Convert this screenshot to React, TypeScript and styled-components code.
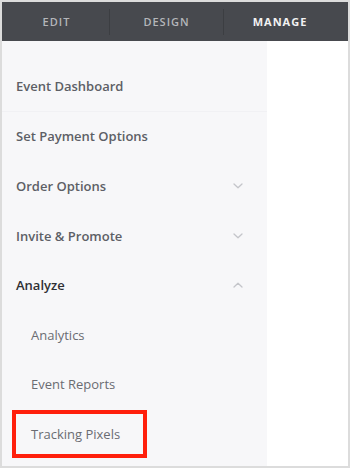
import React from "react";
import styled, { createGlobalStyle } from "styled-components";

const Global = createGlobalStyle`
  html, body { margin: 0; padding: 0; background: #fff; }
  body { font-family: "Open Sans", "Liberation Sans", sans-serif; }
  *, *::before, *::after { box-sizing: border-box; }
`;

const Frame = styled.div`
  width: 350px;
  height: 468px;
  border: 2px solid #dcdcdc;
  display: flex;
  flex-direction: column;
  overflow: hidden;
  background: #fff;
`;

const TopBar = styled.div`
  height: 39px;
  background: #47494e;
  display: grid;
  grid-template-columns: 107px 114px 1fr;
  align-items: center;
  flex-shrink: 0;
`;

const Tab = styled.div<{ $active?: boolean; $divider?: boolean }>`
  height: 26px;
  display: flex;
  align-items: center;
  justify-content: center;
  font-size: 11px;
  letter-spacing: 1px;
  font-weight: ${(p) => (p.$active ? 700 : 600)};
  color: ${(p) => (p.$active ? "#f2f2f2" : "#b4b6ba")};
  border-left: ${(p) => (p.$divider ? "1px solid #3c3e42" : "none")};
  padding-right: ${(p) => (p.$active ? "12px" : "0")};
  padding-left: ${(p) => (p.$divider ? "0" : "2px")};
`;

const Body = styled.div`
  flex: 1;
  display: flex;
`;

const Sidebar = styled.nav`
  width: 265px;
  background: #f7f7f9;
  display: flex;
  flex-direction: column;
  padding-top: 21px;
`;

const Item = styled.div<{ $sub?: boolean; $dark?: boolean; $line?: boolean }>`
  height: 49.6px;
  display: flex;
  align-items: center;
  justify-content: space-between;
  padding-left: ${(p) => (p.$sub ? "29px" : "14px")};
  padding-right: 24px;
  font-size: 13px;
  font-weight: ${(p) => (p.$sub ? 400 : 600)};
  color: ${(p) => (p.$dark ? "#2f3034" : p.$sub ? "#6a6c72" : "#5d5f66")};
  border-bottom: ${(p) => (p.$line ? "1px solid #f1f1f4" : "none")};
`;

const Highlight = styled.span`
  position: relative;
  &::after {
    content: "";
    position: absolute;
    left: -19px;
    top: 50%;
    margin-top: -24px;
    width: 135px;
    height: 48px;
    border: 4px solid #ff1f0c;
  }
`;

const Main = styled.div`
  flex: 1;
  background: #fff;
`;

const Chevron = ({ up }: { up?: boolean }) => (
  <svg width="10" height="6" viewBox="0 0 10 6" fill="none">
    <path
      d={up ? "M1 5 L5 1.2 L9 5" : "M1 1 L5 4.8 L9 1"}
      stroke="#c4c5ca"
      strokeWidth="1.3"
      strokeLinecap="round"
      strokeLinejoin="round"
    />
  </svg>
);

export default function App() {
  return (
    <>
      <Global />
      <Frame>
        <TopBar>
          <Tab>EDIT</Tab>
          <Tab $divider>DESIGN</Tab>
          <Tab $divider $active>MANAGE</Tab>
        </TopBar>
        <Body>
          <Sidebar>
            <Item $line>Event Dashboard</Item>
            <Item>Set Payment Options</Item>
            <Item>
              Order Options <Chevron />
            </Item>
            <Item>
              Invite &amp; Promote <Chevron />
            </Item>
            <Item $dark>
              Analyze <Chevron up />
            </Item>
            <Item $sub>Analytics</Item>
            <Item $sub>Event Reports</Item>
            <Item $sub>
              <Highlight>Tracking Pixels</Highlight>
            </Item>
          </Sidebar>
          <Main />
        </Body>
      </Frame>
    </>
  );
}
